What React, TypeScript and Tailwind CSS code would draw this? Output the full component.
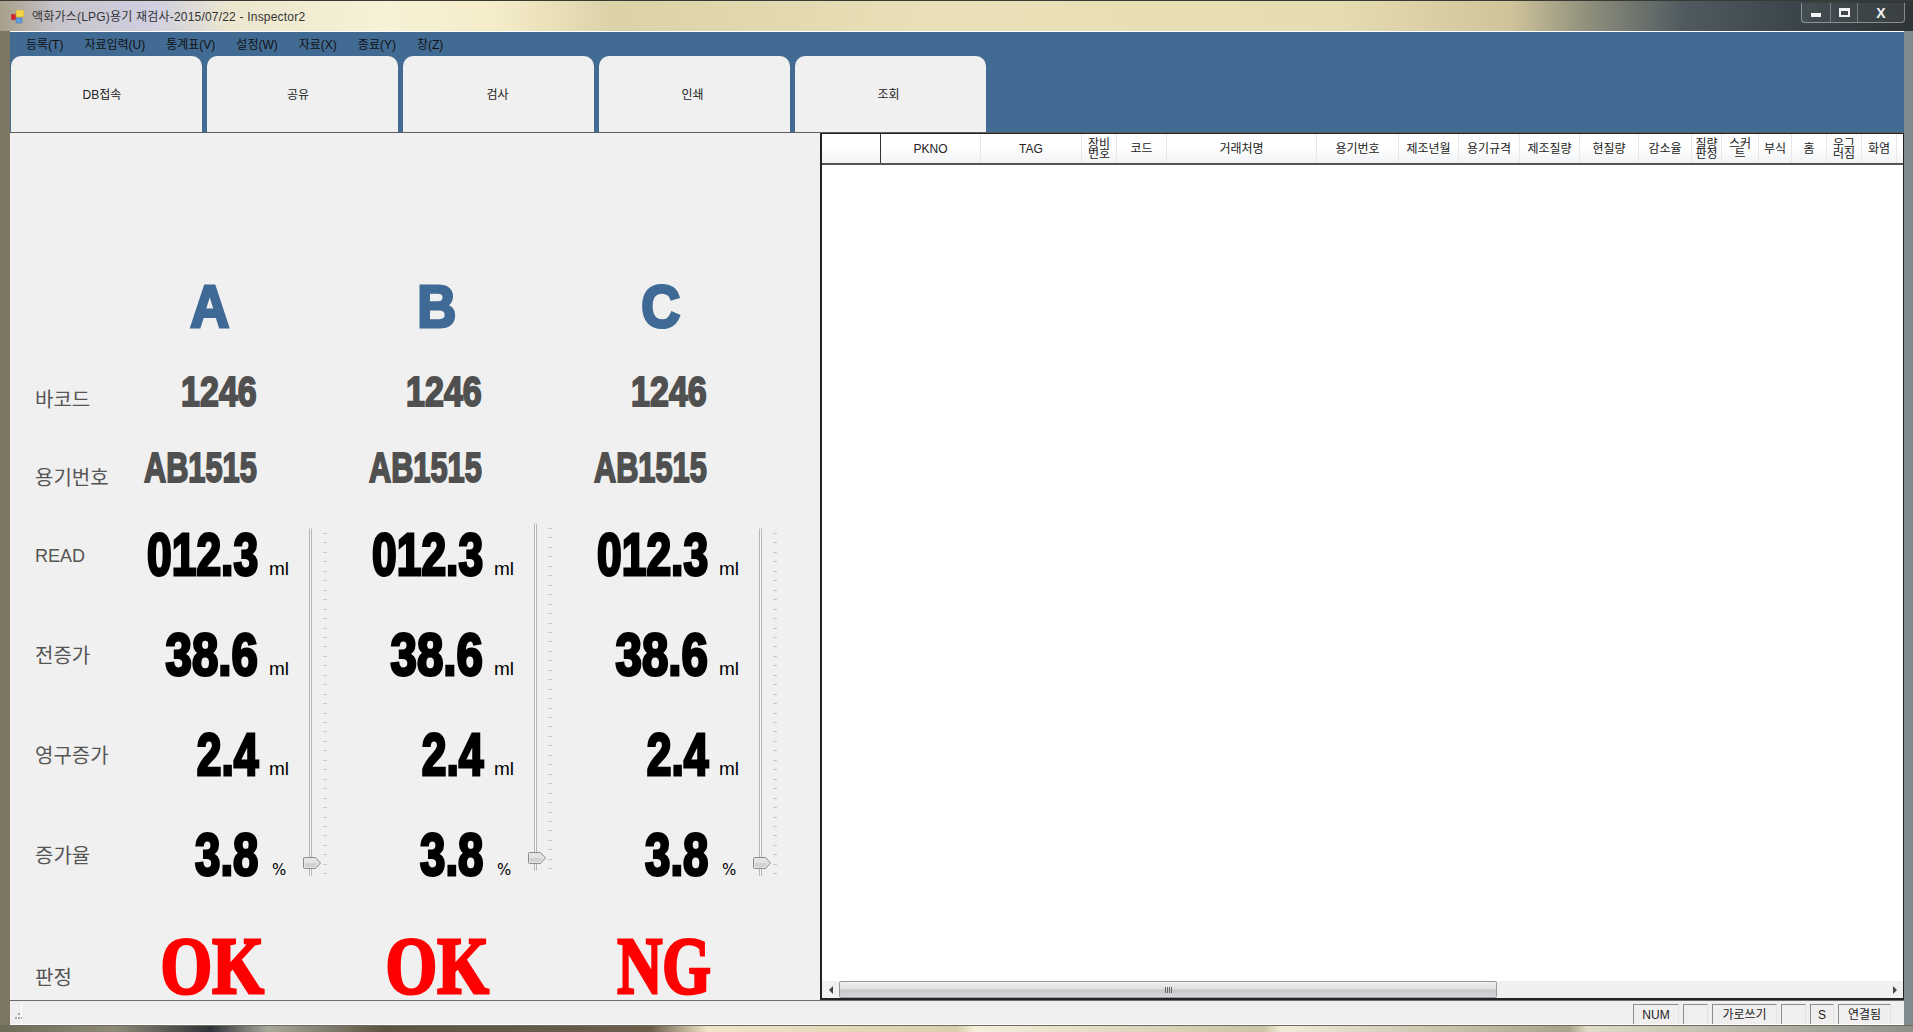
const fontKr = "font-['Liberation_Sans','Noto_Sans_CJK_KR',sans-serif]";

const menus = ["등록(T)", "자료입력(U)", "통계표(V)", "설정(W)", "자료(X)", "종료(Y)", "창(Z)"];
const tabs = [
  { text: "DB접속", nudge: "pr-[9px]" },
  { text: "공유", nudge: "pr-[9px]" },
  { text: "검사", nudge: "pr-[2px]" },
  { text: "인쇄", nudge: "pr-[4px]" },
  { text: "조회", nudge: "pr-[4px]" },
];

const columns = [
  { title: "", width: "w-[59px]" },
  { title: "PKNO", width: "w-[100px]" },
  { title: "TAG", width: "w-[101px]" },
  { title: "장비\n번호", width: "w-[35px]" },
  { title: "코드", width: "w-[50px]" },
  { title: "거래처명", width: "w-[150px]" },
  { title: "용기번호", width: "w-[82px]" },
  { title: "제조년월", width: "w-[60px]" },
  { title: "용기규격", width: "w-[61px]" },
  { title: "제조질량", width: "w-[60px]" },
  { title: "현질량", width: "w-[59px]" },
  { title: "감소율", width: "w-[53px]" },
  { title: "질량\n판정", width: "w-[30px]" },
  { title: "스커\n트", width: "w-[37px]" },
  { title: "부식", width: "w-[33px]" },
  { title: "홈", width: "w-[35px]" },
  { title: "우그\n러짐", width: "w-[35px]" },
  { title: "화염", width: "w-[35px]" },
];

const panels = [
  { text: "NUM", width: "w-[46px]" },
  { text: "", width: "w-[25px]" },
  { text: "가로쓰기", width: "w-[65px]" },
  { text: "", width: "w-[25px]" },
  { text: "S", width: "w-[24px]" },
  { text: "연결됨", width: "w-[53px]" },
];

const measures = [
  { label: "READ", value: "012.3", unit: "ml", squeeze: "scale-x-[.74]", labelSize: "text-[18px]" },
  { label: "전증가", value: "38.6", unit: "ml", squeeze: "scale-x-[.79]", labelSize: "text-[20px]" },
  { label: "영구증가", value: "2.4", unit: "ml", squeeze: "scale-x-[.74]", labelSize: "text-[20px]" },
  { label: "증가율", value: "3.8", unit: "%", squeeze: "scale-x-[.76]", labelSize: "text-[20px]" },
];

const units = [
  { name: "A", result: "OK", slider: "mt-[22px]", squeeze: "scale-x-[.83]", nudge: "pl-[5px]", titleNudge: "pl-[0px]" },
  { name: "B", result: "OK", slider: "mt-[17px]", squeeze: "scale-x-[.83]", nudge: "pl-[5px]", titleNudge: "pl-[4px]" },
  { name: "C", result: "NG", slider: "mt-[22px]", squeeze: "scale-x-[.78]", nudge: "pl-[7px]", titleNudge: "pl-[1px]" },
];

function Label({ children, className = "" }: { children: React.ReactNode; className?: string }) {
  return <div className={`whitespace-nowrap leading-none text-[#555] ${className}`}>{children}</div>;
}

function Slider({ className }: { className: string }) {
  return (
    <div className={`relative row-span-4 h-[348px] ${className}`}>
      <div className="absolute left-[9px] top-0 h-full w-[3px] rounded-sm border-x border-x-[#b5b5b5] bg-[#f7f7f7]" />
      <div className="absolute left-[23px] top-[5px] h-[342px] w-[4px] bg-[repeating-linear-gradient(180deg,#c8c8c8_0,#c8c8c8_1px,transparent_1px,transparent_9.45px)]" />
      <svg className="absolute left-[3px] top-[329px]" width="19" height="12" viewBox="0 0 19 12">
        <path d="M1.5.5h11l5 5.5-5 5.5h-11a1 1 0 0 1-1-1v-9a1 1 0 0 1 1-1z" fill="#e4e4e4" stroke="#8d8d8d" />
        <path d="M2 6h12l-2 4H2z" fill="#d2d2d2" />
      </svg>
    </div>
  );
}

function Measure({ value, unit, squeeze }: { value: string; unit: string; squeeze: string }) {
  return (
    <div className="flex items-baseline justify-end whitespace-nowrap">
      <span className={`inline-block origin-right font-['Liberation_Sans'] text-[60px] font-bold leading-none text-black [-webkit-text-stroke:3px_#000] ${squeeze}`}>
        {value}
      </span>
      {unit === "%" ? (
        <span className="w-[42px] shrink-0 pl-[14px] font-['DejaVu_Sans'] text-[15px] text-black">%</span>
      ) : (
        <span className="w-[42px] shrink-0 pl-[11px] font-['Liberation_Sans'] text-[19px] text-black">ml</span>
      )}
    </div>
  );
}

export default function App() {
  return (
    <div className={`flex h-screen w-full flex-col overflow-hidden ${fontKr}`}>
      {/* aero title bar */}
      <div className="flex h-[31px] shrink-0 items-start justify-between border-t border-t-[#3a3a34] bg-[linear-gradient(90deg,#a8a08a_0%,#c8c4cc_3%,#cfcfe0_8%,#ece6cf_12%,#f7f1d6_20%,#f5edc9_26%,#dcd2a8_32%,#ebe1b8_50%,#e6dcb1_70%,#cfc39a_79%,#8f8f7c_83%,#4f5b60_88%,#39454a_94%,#2f3437_100%)] pl-[11px] pr-[8px]">
        <div className="flex items-center gap-[8px] pt-[9px]">
          <svg width="13" height="14" viewBox="0 0 13 14">
            <rect x="0" y="4" width="5" height="6" fill="#d8232a" stroke="#8a8a8a" strokeWidth=".5" />
            <rect x="5" y="0" width="8" height="7" fill="#f6d44a" stroke="#b49a30" strokeWidth=".5" />
            <rect x="5" y="8" width="6" height="5" fill="#5f9be0" stroke="#4a6ea0" strokeWidth=".5" />
          </svg>
          <span className="text-[12px] leading-none tracking-[.2px] text-[#333]">액화가스(LPG)용기 재검사-2015/07/22 - Inspector2</span>
        </div>
        <div className="mt-[2px] flex h-[20px] rounded-b-[4px] border border-t-0 border-white/40 bg-white/5">
          <div className="flex w-[29px] items-center justify-center border-r border-white/30">
            <div className="mt-[5px] h-[4px] w-[10px] bg-[#f2f2f2]" />
          </div>
          <div className="flex w-[27px] items-center justify-center border-r border-white/30">
            <div className="h-[9px] w-[11px] border-2 border-t-[3px] border-[#f2f2f2]" />
          </div>
          <div className="flex w-[46px] items-center justify-center font-['Liberation_Sans'] text-[14px] font-bold leading-none text-[#f2f2f2]">X</div>
        </div>
      </div>

      <div className="flex min-h-0 flex-1 bg-[linear-gradient(90deg,#7c7662_0%,#7c7662_50%,#7f8b8e_50%,#7f8b8e_100%)] pl-[10px] pr-[9px]">
        <div className="flex min-w-0 flex-1 flex-col border-t border-t-[#fff] bg-[#f0f0f0]">
          {/* menu + tabs */}
          <div className="h-[100px] shrink-0 bg-[#426b93]">
            <div className="flex h-[24px] items-center gap-[21px] pl-[16px] pt-[1px] text-[12px] text-[#111]">
              {menus.map((m) => (
                <span key={m}>{m}</span>
              ))}
            </div>
            <div className="flex gap-[5px] pl-[1px]">
              {tabs.map((t) => (
                <div key={t.text} className={`flex h-[76px] w-[191px] items-center justify-center rounded-t-[10px] bg-[#f0f0f0] pt-[2px] text-[12px] text-[#222] ${t.nudge}`}>
                  {t.text}
                </div>
              ))}
            </div>
          </div>

          <div className="flex min-h-0 flex-1 border-t border-t-[#5f5f5f]">
            {/* left measuring panel */}
            <div className="w-[810px] shrink-0 pl-[25px]">
              <div className="grid grid-cols-[65px_200px_25px_200px_25px_200px_25px] grid-rows-[137px_80px_78px_78px_100px_100px_100px_100px_94px]">
                <div className="col-span-7" />

                <div />
                {units.map((u) => (
                  <div key={u.name} className={`col-span-2 w-[220px] pt-[7px] text-center ${u.titleNudge}`}>
                    <span className="inline-block scale-x-[.9] font-['Liberation_Sans'] text-[60px] font-bold leading-none text-[#3f6a96] [-webkit-text-stroke:3px_#3f6a96]">
                      {u.name}
                    </span>
                  </div>
                ))}

                <Label className="self-center pt-[22px] text-[20px]">바코드</Label>
                {units.map((u) => (
                  <div key={u.name} className="col-span-2 flex items-center justify-end pr-[68px] pt-[4px]">
                    <span className="inline-block origin-right scale-x-[.79] font-['Liberation_Sans'] text-[43px] font-bold leading-none text-[#505050] [-webkit-text-stroke:2px_#505050]">
                      1246
                    </span>
                  </div>
                ))}

                <Label className="self-center pt-[22px] text-[20px]">용기번호</Label>
                {units.map((u) => (
                  <div key={u.name} className="col-span-2 flex items-center justify-end pr-[68px]">
                    <span className="inline-block origin-right scale-x-[.715] font-['Liberation_Sans'] text-[43px] font-bold leading-none text-[#505050] [-webkit-text-stroke:2px_#505050]">
                      AB1515
                    </span>
                  </div>
                ))}

                {measures.map((row, i) => (
                  <div key={row.label} className="contents">
                    <Label className={`self-center ${row.labelSize}`}>{row.label}</Label>
                    {units.map((u) => (
                      <div key={u.name} className="contents">
                        <div className="self-center pb-[2px]">
                          <Measure value={row.value} unit={row.unit} squeeze={row.squeeze} />
                        </div>
                        {i === 0 && <Slider className={u.slider} />}
                      </div>
                    ))}
                  </div>
                ))}

                <Label className="self-start pt-[62px] text-[20px]">판정</Label>
                {units.map((u) => (
                  <div key={u.name} className={`col-span-2 w-[220px] self-start pt-[29px] text-center ${u.nudge}`}>
                    <span className={`inline-block font-['Liberation_Serif'] text-[80px] font-bold leading-[62px] text-[#ff0000] [-webkit-text-stroke:3px_#ff0000] ${u.squeeze}`}>
                      {u.result}
                    </span>
                  </div>
                ))}
              </div>
            </div>

            {/* data grid */}
            <div className="flex min-w-0 flex-1 flex-col border-x border-b-2 border-x-[#222] border-l-2 border-b-[#222] border-t border-t-[#222] bg-white">
              <div className="flex h-[31px] shrink-0 border-b-2 border-b-[#555] bg-[linear-gradient(180deg,#fff_0%,#fff_45%,#f1f2f4_100%)] text-[12px] text-[#222]">
                {columns.map((c, i) => (
                  <div
                    key={i}
                    className={`flex shrink-0 items-center justify-center whitespace-pre-line text-center leading-[10px] ${c.width} ${
                      i === 0 ? "border-r border-r-[#333]" : "border-r border-r-[#e8e8e8]"
                    }`}
                  >
                    {c.title}
                  </div>
                ))}
              </div>
              <div className="min-h-0 flex-1" />
              <div className="flex h-[17px] shrink-0 items-center bg-[#f0f0f0]">
                <div className="flex w-[17px] shrink-0 items-center justify-center">
                  <div className="h-0 w-0 border-y-[4px] border-r-[4px] border-y-transparent border-r-[#444]" />
                </div>
                <div className="flex h-full w-[658px] shrink-0 items-center justify-center gap-[1px] rounded-[2px] border border-[#9a9a9a] bg-[linear-gradient(180deg,#f0f0f0_0%,#e0e0e0_45%,#c8c8cc_55%,#d8d8dc_100%)]">
                  <div className="h-[6px] w-[1px] bg-[#666]" />
                  <div className="h-[6px] w-[1px] bg-[#666]" />
                  <div className="h-[6px] w-[1px] bg-[#666]" />
                  <div className="h-[6px] w-[1px] bg-[#666]" />
                </div>
                <div className="flex-1" />
                <div className="flex w-[17px] shrink-0 items-center justify-center">
                  <div className="h-0 w-0 border-y-[4px] border-l-[4px] border-y-transparent border-l-[#444]" />
                </div>
              </div>
            </div>
          </div>

          {/* status bar */}
          <div className="z-10 flex h-[25px] shrink-0 items-stretch justify-between border-y border-y-[#6a6a6a] border-b-white bg-[#f0eeee] pt-[3px]">
            <div className="w-[12px] border-r border-r-white pl-[4px]">
              <svg width="8" height="18" viewBox="0 0 8 18">
                <rect x="4" y="9" width="2" height="2" fill="#aaa" />
                <rect x="1" y="13" width="2" height="2" fill="#aaa" />
                <rect x="4" y="13" width="2" height="2" fill="#aaa" />
                <rect x="7" y="13" width="2" height="2" fill="#aaa" />
              </svg>
            </div>
            <div className="flex gap-[4px] pr-[13px]">
              {panels.map((p, i) => (
                <div
                  key={i}
                  className={`flex items-center justify-center border-l border-t border-l-[#8e8e8e] border-t-[#8e8e8e] border-r border-r-[#e2e2e2] text-[12px] leading-none text-[#222] ${p.width}`}
                >
                  {p.text}
                </div>
              ))}
            </div>
          </div>
        </div>
      </div>

      {/* aero bottom edge */}
      <div className="h-[7px] shrink-0 border-t border-t-[#6c6a5c] bg-[linear-gradient(90deg,#6e6a58_0%,#8f8a78_6%,#2f3338_11%,#a8a89a_14%,#5c5444_20%,#6b5f4c_34%,#efe6c8_37%,#d8cfae_50%,#f4efdc_51%,#cbc4a6_66%,#f0ecd8_67%,#a8a48c_82%,#e0dcc8_83%,#8f9088_100%)]" />
    </div>
  );
}
